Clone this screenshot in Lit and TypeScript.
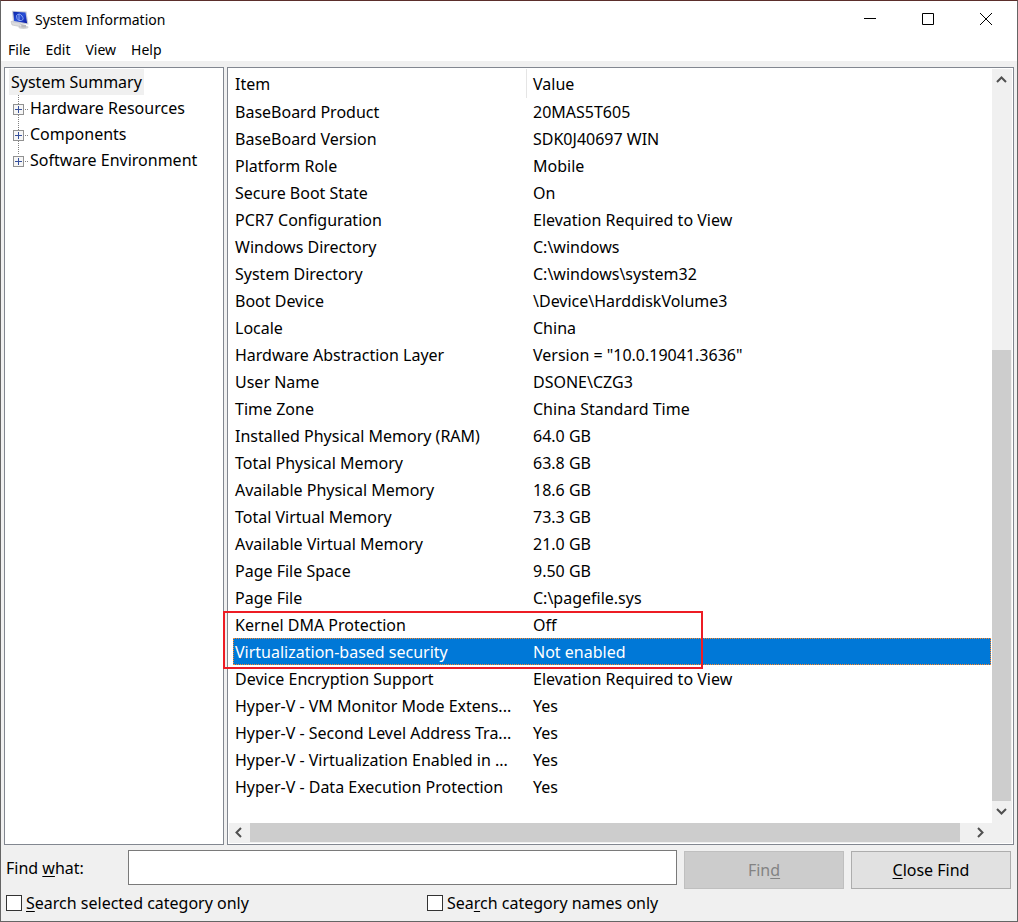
import { LitElement, html, css, svg } from "lit";
import { customElement, property, state } from "lit/decorators.js";
import { classMap } from "lit/directives/class-map.js";

interface Row {
  item: string;
  value: string;
}

const ROWS: Row[] = [
  { item: "BaseBoard Product", value: "20MAS5T605" },
  { item: "BaseBoard Version", value: "SDK0J40697 WIN" },
  { item: "Platform Role", value: "Mobile" },
  { item: "Secure Boot State", value: "On" },
  { item: "PCR7 Configuration", value: "Elevation Required to View" },
  { item: "Windows Directory", value: "C:\\windows" },
  { item: "System Directory", value: "C:\\windows\\system32" },
  { item: "Boot Device", value: "\\Device\\HarddiskVolume3" },
  { item: "Locale", value: "China" },
  { item: "Hardware Abstraction Layer", value: 'Version = "10.0.19041.3636"' },
  { item: "User Name", value: "DSONE\\CZG3" },
  { item: "Time Zone", value: "China Standard Time" },
  { item: "Installed Physical Memory (RAM)", value: "64.0 GB" },
  { item: "Total Physical Memory", value: "63.8 GB" },
  { item: "Available Physical Memory", value: "18.6 GB" },
  { item: "Total Virtual Memory", value: "73.3 GB" },
  { item: "Available Virtual Memory", value: "21.0 GB" },
  { item: "Page File Space", value: "9.50 GB" },
  { item: "Page File", value: "C:\\pagefile.sys" },
  { item: "Kernel DMA Protection", value: "Off" },
  { item: "Virtualization-based security", value: "Not enabled" },
  { item: "Device Encryption Support", value: "Elevation Required to View" },
  { item: "Hyper-V - VM Monitor Mode Extens...", value: "Yes" },
  { item: "Hyper-V - Second Level Address Tra...", value: "Yes" },
  { item: "Hyper-V - Virtualization Enabled in ...", value: "Yes" },
  { item: "Hyper-V - Data Execution Protection", value: "Yes" },
];

const CHEVRONS: Record<string, string> = {
  up: "M1 8 L5.5 3.5 L10 8",
  down: "M1 2 L5.5 6.5 L10 2",
  left: "M7 1 L2.5 5.5 L7 10",
  right: "M2 1 L6.5 5.5 L2 10",
};

@customElement("scroll-bar")
class ScrollBar extends LitElement {
  @property() direction = "vertical";

  static styles = css`
    :host {
      display: flex;
      background: #f0f0f0;
    }
    :host([direction="vertical"]) {
      flex-direction: column;
      padding-right: 1px;
    }
    :host([direction="horizontal"]) {
      padding-bottom: 1px;
    }
    button {
      display: flex;
      align-items: center;
      justify-content: center;
      flex: 0 0 21px;
      padding: 0;
      border: 0;
      background: #f0f0f0;
    }
    .chevron {
      width: 11px;
      height: 11px;
      fill: none;
      stroke: #505050;
      stroke-width: 2;
    }
    .track {
      display: flex;
      flex: 1;
    }
    .track.vertical {
      flex-direction: column;
    }
    .thumb {
      background: #cdcdcd;
    }
    .vertical .before {
      flex: 260;
    }
    .vertical .thumb {
      flex: 451;
    }
    .vertical .after {
      flex: 1;
    }
    .horizontal .thumb {
      flex: 710;
    }
    .horizontal .after {
      flex: 11;
    }
  `;

  private arrow(name: string, label: string) {
    return html`<button type="button" aria-label=${label}>
      <svg class="chevron" viewBox="0 0 11 11">${svg`<path d=${CHEVRONS[name]} />`}</svg>
    </button>`;
  }

  render() {
    const vertical = this.direction === "vertical";
    return html`
      ${vertical ? this.arrow("up", "Scroll up") : this.arrow("left", "Scroll left")}
      <div class="track ${this.direction}">
        <div class="before"></div>
        <div class="thumb"></div>
        <div class="after"></div>
      </div>
      ${vertical ? this.arrow("down", "Scroll down") : this.arrow("right", "Scroll right")}
    `;
  }
}

@customElement("category-tree")
class CategoryTree extends LitElement {
  static styles = css`
    :host {
      display: block;
      padding: 1px 4px;
      border: 1px solid #828790;
      background: #fff;
      font-size: 16px;
      line-height: 26px;
      white-space: nowrap;
      overflow: hidden;
    }
    .root {
      display: inline-block;
      padding: 0 2px;
      background: #f0f0f0;
      vertical-align: top;
    }
    ul {
      margin: 0;
      padding: 0;
      list-style: none;
    }
    .branch {
      display: flex;
      align-items: center;
      gap: 1px;
      height: 26px;
      padding-left: 4px;
    }
    .joint {
      flex: none;
      width: 16px;
      height: 26px;
    }
  `;

  render() {
    return html`
      <div class="root">System Summary</div>
      <ul>
        ${["Hardware Resources", "Components", "Software Environment"].map(
          (name, i, all) => html`<li class="branch">
            <svg class="joint" viewBox="0 0 16 26" shape-rendering="crispEdges">
              <path d="M5.5 0V${i === all.length - 1 ? 8 : 26}" stroke="#808080" stroke-dasharray="1 1" />
              <path d="M12 14.5H16" stroke="#808080" stroke-dasharray="1 1" />
              <rect x="0.5" y="9.5" width="10" height="10" fill="#f6f6f6" stroke="#919191" />
              <path d="M2 14.5H9M5.5 11V18" stroke="#36509c" />
            </svg>
            <span>${name}</span>
          </li>`
        )}
      </ul>
    `;
  }
}

@customElement("app-root")
class AppRoot extends LitElement {
  @state() private selected = 20;

  static styles = css`
    :host {
      display: block;
      height: 100vh;
      font-family: "Noto Sans", "Open Sans", sans-serif;
      font-size: 16px;
      color: #000;
    }
    * {
      box-sizing: border-box;
    }
    .window {
      display: flex;
      flex-direction: column;
      height: 100%;
      border: 1px solid #656565;
      border-top-color: #5b2e2b;
      background: #f0f0f0;
    }
    .titlebar {
      display: flex;
      align-items: center;
      height: 37px;
      padding: 0 2px 0 9px;
      background: #fff;
    }
    .app-icon {
      width: 20px;
      height: 20px;
      margin-right: 5px;
    }
    h1 {
      flex: 1;
      margin: 0;
      font-size: 14px;
      font-weight: 400;
    }
    .caption {
      width: 58px;
      height: 36px;
      padding: 0 0 2px;
      border: 0;
      background: none;
    }
    .caption svg {
      width: 14px;
      height: 14px;
      fill: none;
      stroke: #000;
      vertical-align: middle;
    }
    .menubar {
      display: flex;
      gap: 15px;
      height: 23px;
      padding-left: 7px;
      background: #fff;
    }
    .menubar button {
      padding: 0;
      border: 0;
      background: none;
      font: inherit;
      font-size: 14px;
      line-height: 24px;
      color: inherit;
    }
    .panes {
      display: grid;
      grid-template-columns: 220px minmax(0, 1fr);
      gap: 3px;
      flex: 1;
      min-height: 0;
      padding: 6px 3px 5px;
    }
    .details {
      position: relative;
      display: grid;
      grid-template-columns: minmax(0, 1fr) 20px;
      grid-template-rows: minmax(0, 1fr) 20px;
      padding: 1px;
      border: 1px solid #828790;
      background: #fff;
    }
    .list {
      padding: 0 1px 0 4px;
    }
    .corner {
      background: #f0f0f0;
    }
    table {
      width: 100%;
      border-collapse: separate;
      border-spacing: 0;
      table-layout: fixed;
      line-height: 26px;
    }
    .item-column {
      width: 294px;
    }
    th,
    td {
      height: 27px;
      padding: 1px 0 0 6px;
      font-weight: 400;
      text-align: left;
      white-space: nowrap;
    }
    th {
      height: 29px;
    }
    th:first-child,
    td:first-child {
      padding-left: 2px;
    }
    th:first-child {
      border-right: 1px solid #e5e5e5;
    }
    .selected {
      background: #0078d7;
      color: #fff;
      outline: 1px dotted #ff8728;
      outline-offset: -1px;
    }
    .callout {
      position: absolute;
      top: 543px;
      left: -5px;
      width: 480px;
      height: 58px;
      border: 2px solid #ed1c24;
      pointer-events: none;
    }
    .find {
      display: grid;
      grid-template-columns: 115px minmax(0, 1fr) 160px 160px;
      column-gap: 7px;
      padding: 0 6px 0 5px;
    }
    .find > label {
      line-height: 36px;
    }
    .find input {
      width: 100%;
      height: 35px;
      margin: 0;
      padding: 0 6px;
      border: 1px solid #7a7a7a;
      border-radius: 0;
      background: #fff;
      font: inherit;
    }
    .find button {
      height: 38px;
      margin-top: 1px;
      padding: 0;
      border: 1px solid #adadad;
      border-radius: 0;
      background: #e1e1e1;
      font: inherit;
      color: #000;
    }
    .find button:disabled {
      border-color: #bfbfbf;
      background: #cccccc;
      color: #838383;
    }
    .options {
      display: grid;
      grid-template-columns: 421px 1fr;
      height: 32px;
      padding-left: 5px;
    }
    .options label {
      display: flex;
      align-items: center;
      gap: 4px;
      height: 28px;
    }
    .options input {
      appearance: none;
      width: 16px;
      height: 16px;
      margin: 0;
      border: 1px solid #333;
      background: #fff;
    }
    u {
      text-underline-offset: 2px;
      text-decoration-thickness: 1px;
    }
  `;

  private appIcon() {
    return html`<svg class="app-icon" viewBox="0 0 20 20" aria-hidden="true">
      <defs>
        <linearGradient id="screen" x1="0" y1="0" x2="1" y2="1">
          <stop offset="0" stop-color="#0a24a8" />
          <stop offset="0.5" stop-color="#2a50d8" />
          <stop offset="1" stop-color="#0818a0" />
        </linearGradient>
      </defs>
      <ellipse cx="13.500" cy="17.300" rx="5" ry="1.700" fill="#d2d2d4" />
      <path d="M11 14l5 1v2.500h-4.500z" fill="#b9b9bd" />
      <path d="M1 11.500l4-1 6 3.500-1.500 2.500-7.500-1.500z" fill="#dcdcde" stroke="#b4b4b8" stroke-width=".5" />
      <path d="M2 .800l14.500.800 2 13L3 12.500z" fill="#c9cbd6" />
      <path d="M3.200 1.800l12.300.800 1.600 10.600L4.200 11z" fill="url(#screen)" />
      <path d="M6.500 5.500q3-3 5.500.5t-.5 4.500-4.500-2zM9 4v6.500" fill="none" stroke="#8ea8f2" stroke-width="1" />
    </svg>`;
  }

  render() {
    return html`
      <div class="window">
        <header class="titlebar">
          ${this.appIcon()}
          <h1>System Information</h1>
          <button class="caption" type="button" aria-label="Minimize">
            <svg viewBox="0 0 14 14"><path d="M1 6.500H13" /></svg>
          </button>
          <button class="caption" type="button" aria-label="Maximize">
            <svg viewBox="0 0 14 14"><path d="M1.500 1.500H12.500V12.500H1.500Z" /></svg>
          </button>
          <button class="caption" type="button" aria-label="Close">
            <svg viewBox="0 0 14 14"><path d="M1 1L13 13M13 1L1 13" /></svg>
          </button>
        </header>
        <nav class="menubar">
          ${["File", "Edit", "View", "Help"].map((name) => html`<button type="button">${name}</button>`)}
        </nav>
        <main class="panes">
          <category-tree></category-tree>
          <section class="details">
            <div class="list">
              <table>
                <colgroup>
                  <col class="item-column" />
                  <col />
                </colgroup>
                <thead>
                  <tr>
                    <th scope="col">Item</th>
                    <th scope="col">Value</th>
                  </tr>
                </thead>
                <tbody>
                  ${ROWS.map(
                    (row, i) => html`<tr
                      class=${classMap({ selected: i === this.selected })}
                      @click=${() => (this.selected = i)}
                    >
                      <td>${row.item}</td>
                      <td>${row.value}</td>
                    </tr>`
                  )}
                </tbody>
              </table>
            </div>
            <scroll-bar direction="vertical"></scroll-bar>
            <scroll-bar direction="horizontal"></scroll-bar>
            <div class="corner"></div>
            <div class="callout"></div>
          </section>
        </main>
        <form class="find" @submit=${(e: Event) => e.preventDefault()}>
          <label for="query">Find <u>w</u>hat:</label>
          <input id="query" type="text" autocomplete="off" />
          <button type="submit" disabled>Fin<u>d</u></button>
          <button type="button"><u>C</u>lose Find</button>
        </form>
        <div class="options">
          <label><input type="checkbox" /><span><u>S</u>earch selected category only</span></label>
          <label><input type="checkbox" /><span>Sea<u>r</u>ch category names only</span></label>
        </div>
      </div>
    `;
  }
}
